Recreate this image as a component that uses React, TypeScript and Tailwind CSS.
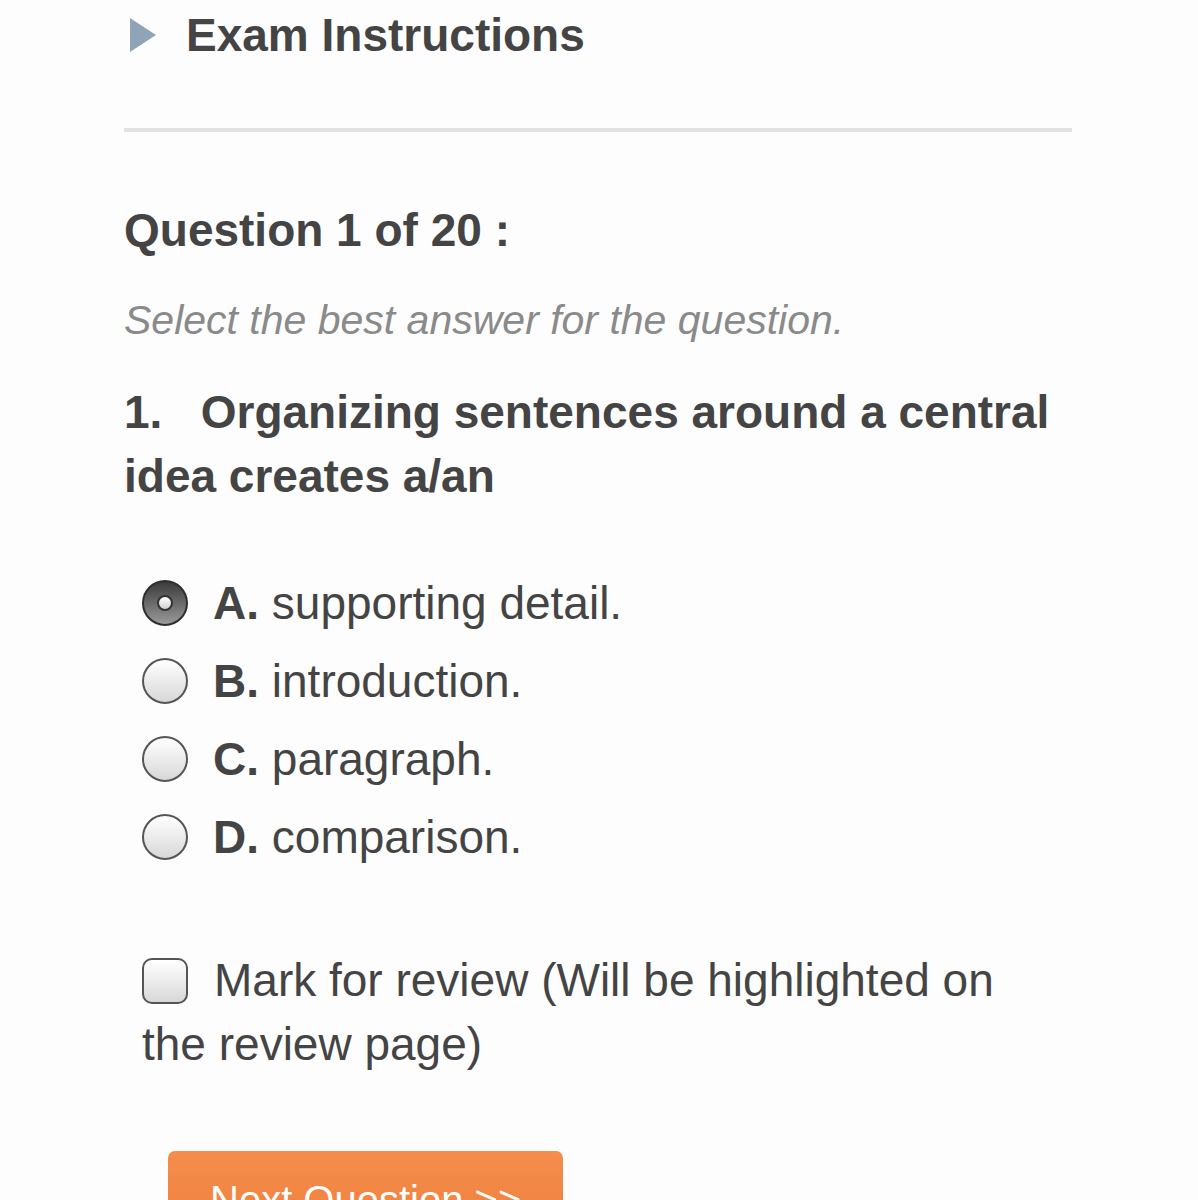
import React from 'react'

const options = [
  { letter: 'A', text: 'supporting detail.', selected: true },
  { letter: 'B', text: 'introduction.', selected: false },
  { letter: 'C', text: 'paragraph.', selected: false },
  { letter: 'D', text: 'comparison.', selected: false },
]

function Radio({ selected }: { selected: boolean }) {
  if (selected) {
    return (
      <span className="flex h-[46px] w-[46px] shrink-0 items-center justify-center rounded-full border-2 border-[#2e2e2e] bg-gradient-to-b from-[#3c3c3c] via-[#6a6a6a] to-[#9a9a9a]">
        <span className="h-[16px] w-[16px] rounded-full border-2 border-[#333] bg-gradient-to-b from-white to-[#cfcfcf]" />
      </span>
    )
  }
  return (
    <span className="h-[46px] w-[46px] shrink-0 rounded-full border-2 border-[#555] bg-gradient-to-b from-white to-[#d8d8d8]" />
  )
}

export default function App() {
  return (
    <div className="min-h-screen bg-[#fdfdfd] font-['Liberation_Sans',Arial,sans-serif] text-[#444]">
      <div className="pl-[124px] pr-[126px]">
        {/* Header */}
        <div className="flex h-[70px] items-center">
          <svg width="26" height="34" viewBox="0 0 26 34" className="ml-[6px]">
            <polygon points="0,0 26,17 0,34" fill="#8fa4b7" />
          </svg>
          <h1 className="ml-[30px] text-[46px] font-bold leading-none">Exam Instructions</h1>
        </div>

        <div className="mt-[58px] h-[4px] bg-[#e2e2e2]" />

        {/* Question */}
        <h2 className="mt-[72px] text-[46px] font-bold leading-[53px]">Question 1 of 20 :</h2>
        <p className="mt-[40px] text-[41px] italic leading-[46px] text-[#8a8a8a]">
          Select the best answer for the question.
        </p>
        <p className="mt-[37px] text-[46px] font-bold leading-[64px]">
          1.&nbsp;&nbsp;&nbsp;Organizing sentences around a central idea creates a/an
        </p>

        {/* Options */}
        <div className="mt-[56px] pl-[18px]">
          {options.map((o) => (
            <div key={o.letter} className="flex h-[78px] items-center gap-[25px] text-[46px] leading-[78px]">
              <Radio selected={o.selected} />
              <span>
                <span className="font-bold">{o.letter}.</span> {o.text}
              </span>
            </div>
          ))}
        </div>

        {/* Mark for review */}
        <p className="mt-[72px] pl-[18px] pr-[44px] text-[46px] leading-[64px]">
          <span className="mr-[26px] inline-block h-[46px] w-[46px] rounded-[10px] border-2 border-[#555] bg-gradient-to-b from-white to-[#d8d8d8] align-[-8px]" />
          Mark for review (Will be highlighted on the review page)
        </p>

        <button className="ml-[44px] mt-[75px] rounded-[7px] bg-gradient-to-b from-[#f58d4c] to-[#ee7e3a] px-[42px] pb-[26px] pt-[26px] text-[40px] leading-[46px] text-white">
          Next Question &gt;&gt;
        </button>
      </div>
    </div>
  )
}
